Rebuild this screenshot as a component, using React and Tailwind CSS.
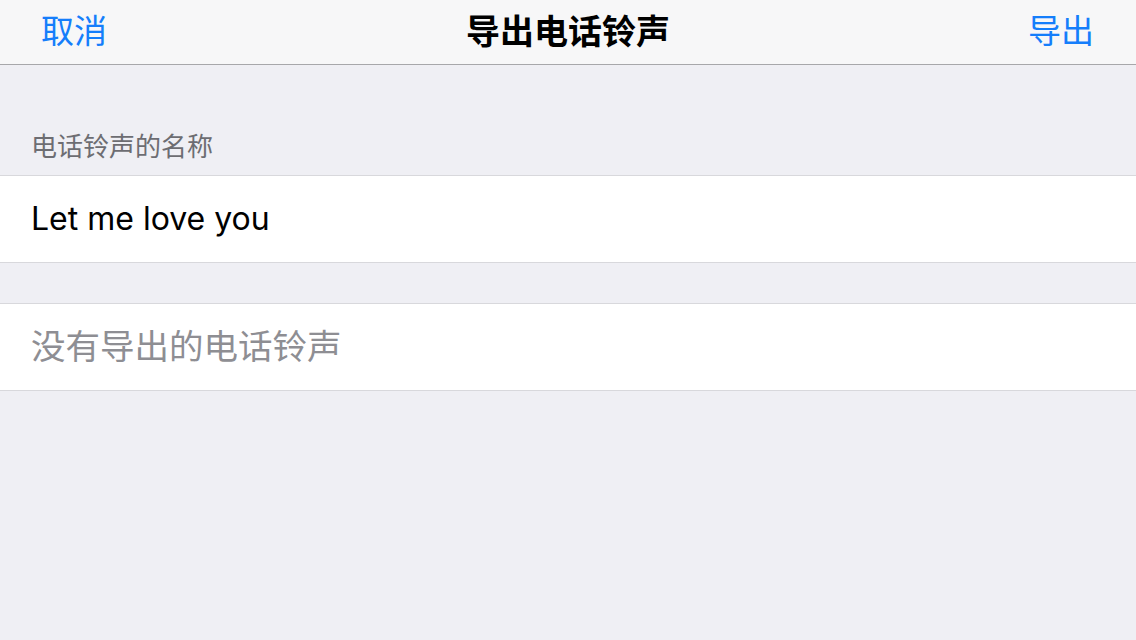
export default function App() {
  const cjk = { fontFamily: 'Inter, "Noto Sans CJK SC", sans-serif' };
  return (
    <div className="w-[1136px] h-[640px] bg-[#efeff4] flex flex-col overflow-hidden" style={cjk}>
      <div className="h-[65px] bg-[#f7f7f8] border-b border-[#a7a7aa] flex items-center justify-between pl-[41px] pr-[42px] relative shrink-0">
        <span className="text-[33px] leading-none text-[#157efb] pb-[1px]">取消</span>
        <span className="absolute left-0 right-0 text-center text-[34px] font-bold leading-none text-black pointer-events-none pb-[1px]">导出电话铃声</span>
        <span className="text-[33px] leading-none text-[#157efb] pb-[1px]">导出</span>
      </div>
      <div className="h-[62px] shrink-0"></div>
      <div className="h-[48px] px-[31px] flex items-start shrink-0">
        <span className="text-[26px] leading-none text-[#6d6d72] pt-[7px]">电话铃声的名称</span>
      </div>
      <div className="h-[88px] bg-white border-y border-[#d8d8dc] flex items-center px-[31px] shrink-0">
        <span className="text-[32px] leading-none text-black pb-[1px]">Let me love you</span>
      </div>
      <div className="h-[40px] shrink-0"></div>
      <div className="h-[88px] bg-white border-y border-[#d8d8dc] flex items-center px-[31px] shrink-0">
        <span className="text-[34.5px] leading-none text-[#8e8e93]">没有导出的电话铃声</span>
      </div>
    </div>
  );
}
